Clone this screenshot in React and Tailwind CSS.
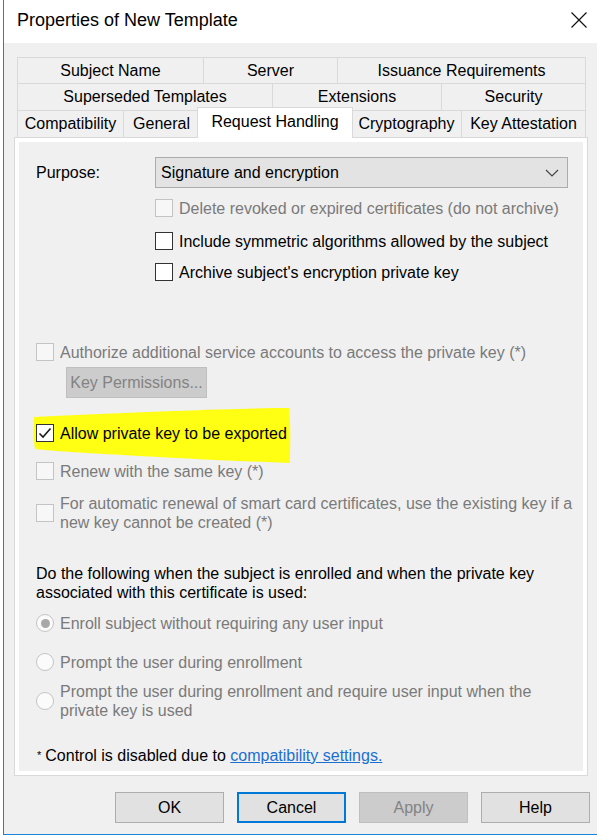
import React from 'react';

const FONT = { fontFamily: '"Liberation Sans", Arial, sans-serif' };

function Tab({ w, h, last, children }) {
    return (
        <div
            className={`flex items-center justify-center border-t border-l border-[#d9d9d9] bg-[#f0f0f0] text-[16px] text-black ${last ? 'border-r' : ''}`}
            style={{ width: w, height: h }}
        >
            {children}
        </div>
    );
}

function CheckBox({ disabled, checked }) {
    return (
        <div
            className={`w-[18px] h-[18px] shrink-0 border flex items-center justify-center ${disabled ? 'border-[#c4c4c4] bg-[#f7f7f7]' : 'border-[#333333] bg-white'} ${checked ? 'bg-transparent' : ''}`}
        >
            {checked && (
                <svg width="14" height="12" viewBox="0 0 14 12">
                    <path d="M1.5 6.5 L5 10 L12.5 1.5" fill="none" stroke="#1a1a1a" strokeWidth="1.6" />
                </svg>
            )}
        </div>
    );
}

function Radio({ selected }) {
    return (
        <div className="w-[18px] h-[18px] shrink-0 rounded-full border border-[#c4c4c4] bg-[#fbfbfb] flex items-center justify-center">
            {selected && <div className="w-[9px] h-[9px] rounded-full bg-[#a8a8a8]" />}
        </div>
    );
}

function Row({ children, disabled, className = '' }) {
    return (
        <div className={`flex items-center gap-[6px] text-[16px] leading-[19px] ${disabled ? 'text-[#7a7a7a]' : 'text-black'} ${className}`}>
            {children}
        </div>
    );
}

function Button({ children, primary, disabled }) {
    return (
        <div
            className={`w-[109px] h-[31px] flex items-center justify-center text-[16px] ${
                primary
                    ? 'border-2 border-[#0078d7] bg-[#e1e1e1] text-black'
                    : disabled
                    ? 'border border-[#bfbfbf] bg-[#cccccc] text-[#838383]'
                    : 'border border-[#adadad] bg-[#e1e1e1] text-black'
            }`}
        >
            {children}
        </div>
    );
}

export default function App() {
    return (
        <div className="w-[597px] h-[836px] bg-white flex overflow-hidden" style={FONT}>
            {/* window behind, clipped */}
            <div className="w-[3px] bg-white" />

            {/* dialog window */}
            <div className="flex-1 h-[835px] border-l border-b border-[#1883d7] bg-[#f0f0f0] flex flex-col">
                {/* title bar */}
                <div className="h-[43px] bg-white flex items-center justify-between pl-[13px] pr-[10px]">
                    <div className="text-[18px] text-black pb-[3px]">Properties of New Template</div>
                    <svg width="16" height="16" viewBox="0 0 16 16" className="mb-[3px]">
                        <path d="M0.5 0.5 L15.5 15.5 M15.5 0.5 L0.5 15.5" stroke="#111" strokeWidth="1.2" />
                    </svg>
                </div>

                {/* tabs */}
                <div className="pt-[14px] pl-[13px]">
                    <div className="flex">
                        <Tab w={186} h={26}>Subject Name</Tab>
                        <Tab w={134} h={26}>Server</Tab>
                        <Tab w={249} h={26} last>Issuance Requirements</Tab>
                    </div>
                    <div className="flex">
                        <Tab w={255} h={27}>Superseded Templates</Tab>
                        <Tab w={169} h={27}>Extensions</Tab>
                        <Tab w={145} h={27} last>Security</Tab>
                    </div>
                    <div className="flex">
                        <Tab w={106} h={27}>Compatibility</Tab>
                        <Tab w={76} h={27}>General</Tab>
                        <div className="relative w-[152px] h-[27px] border-t border-l border-[#d9d9d9]">
                            <div className="absolute -left-[3px] -right-[2px] -top-[4px] -bottom-[1px] z-10 bg-white border border-b-0 border-[#d9d9d9] flex items-center justify-center text-[16px] text-black pb-[2px]">
                                Request Handling
                            </div>
                        </div>
                        <Tab w={110} h={27}>Cryptography</Tab>
                        <Tab w={125} h={27} last>Key Attestation</Tab>
                    </div>
                </div>

                {/* tab page */}
                <div className="ml-[10px] w-[574px] h-[639px] border border-[#d9d9d9] bg-white p-[4px]">
                    <div className="h-full bg-[#f0f0f0] pt-[15px] pl-[17px] flex flex-col">
                        {/* purpose */}
                        <div className="flex items-center">
                            <div className="w-[119px] text-[16px] text-black">Purpose:</div>
                            <div className="w-[413px] h-[31px] border border-[#acacac] bg-[#e3e3e3] flex items-center justify-between pl-[5px] pr-[8px] text-[16px] text-black">
                                <span>Signature and encryption</span>
                                <svg width="14" height="8" viewBox="0 0 14 8">
                                    <path d="M1 1 L7 7 L13 1" fill="none" stroke="#444" strokeWidth="1.2" />
                                </svg>
                            </div>
                        </div>

                        <div className="pl-[119px]">
                            <Row disabled className="mt-[10px] h-[20px]">
                                <CheckBox disabled />
                                <span>Delete revoked or expired certificates (do not archive)</span>
                            </Row>
                            <Row className="mt-[13px] h-[20px]">
                                <CheckBox />
                                <span>Include symmetric algorithms allowed by the subject</span>
                            </Row>
                            <Row className="mt-[11px] h-[20px]">
                                <CheckBox />
                                <span>Archive subject's encryption private key</span>
                            </Row>
                        </div>

                        <Row disabled className="mt-[60px] h-[20px]">
                            <CheckBox disabled />
                            <span>Authorize additional service accounts to access the private key (*)</span>
                        </Row>
                        <div className="mt-[5px] ml-[30px] w-[141px] h-[31px] border border-[#bfbfbf] bg-[#cccccc] flex items-center justify-center text-[16px] text-[#838383]">
                            Key Permissions...
                        </div>

                        {/* highlighted row */}
                        <div className="relative mt-[25px] h-[20px]">
                            <svg width="262" height="60" viewBox="0 0 262 60" className="absolute -left-[3px] -top-[16px]">
                                <path
                                    d="M1 10 C40 8 90 6 140 4 C190 2 230 1 256 1 C258 18 257 40 257 56 C200 54 140 51 90 48 C50 46 20 44 2 42 C0 30 1 18 1 10 Z"
                                    fill="#ffff14"
                                />
                            </svg>
                            <Row className="relative h-[20px]">
                                <CheckBox checked />
                                <span>Allow private key to be exported</span>
                            </Row>
                        </div>

                        <Row disabled className="mt-[18px] h-[20px]">
                            <CheckBox disabled />
                            <span>Renew with the same key (*)</span>
                        </Row>
                        <Row disabled className="mt-[13px] h-[38px]">
                            <CheckBox disabled />
                            <span>
                                For automatic renewal of smart card certificates, use the existing key if a
                                <br />
                                new key cannot be created (*)
                            </span>
                        </Row>

                        <div className="mt-[32px] text-[16px] leading-[19px] text-black">
                            Do the following when the subject is enrolled and when the private key
                            <br />
                            associated with this certificate is used:
                        </div>

                        <Row disabled className="mt-[11px] h-[20px]">
                            <Radio selected />
                            <span>Enroll subject without requiring any user input</span>
                        </Row>
                        <Row disabled className="mt-[19px] h-[20px]">
                            <Radio />
                            <span>Prompt the user during enrollment</span>
                        </Row>
                        <Row disabled className="mt-[10px] h-[38px]">
                            <Radio />
                            <span>
                                Prompt the user during enrollment and require user input when the
                                <br />
                                private key is used
                            </span>
                        </Row>

                        <div className="mt-[26px] h-[20px] flex items-center text-[16px] text-black">
                            <span className="text-[11px] self-start mt-[1px] mr-[4px] ml-[1px]">*</span>
                            <span>Control is disabled due to&nbsp;</span>
                            <span className="text-[#1a6fd0] underline">compatibility settings.</span>
                        </div>
                    </div>
                </div>

                {/* buttons */}
                <div className="mt-[16px] flex justify-end gap-[13px] pr-[7px]">
                    <Button>OK</Button>
                    <Button primary>Cancel</Button>
                    <Button disabled>Apply</Button>
                    <Button>Help</Button>
                </div>
            </div>
        </div>
    );
}
